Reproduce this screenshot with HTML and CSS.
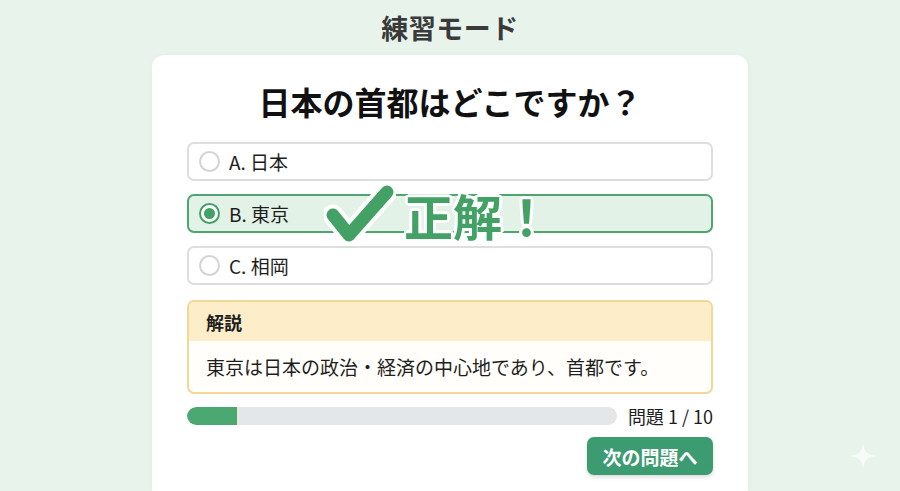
FILE: index.html
```html
<!DOCTYPE html>
<html lang="ja">
<head>
<meta charset="utf-8">
<title>練習モード</title>
<link rel="stylesheet" href="styles.css">
</head>
<body>
<header class="header"><h1 class="title">練習モード</h1></header>
<main class="card">
  <h2 class="question">日本の首都はどこですか？</h2>
  <div class="options">
    <div class="option"><span class="radio"></span><span class="label">A. 日本</span></div>
    <div class="option selected"><span class="radio"><span class="dot"></span></span><span class="label">B. 東京</span></div>
    <div class="option"><span class="radio"></span><span class="label">C. 相岡</span></div>
    <div class="result">
      <svg class="check" width="72" height="60" viewBox="0 0 72 60">
        <polyline points="9,31 25,51 63,8" fill="none" stroke="#ffffff" stroke-width="21" stroke-linecap="round" stroke-linejoin="round"/>
        <polyline points="9,31 25,51 63,8" fill="none" stroke="#43a166" stroke-width="13" stroke-linecap="round" stroke-linejoin="round"/>
      </svg>
      <span class="result-text">正解！</span>
    </div>
  </div>
  <section class="explain">
    <div class="explain-head">解説</div>
    <div class="explain-body">東京は日本の政治・経済の中心地であり、首都です。</div>
  </section>
  <div class="progress-row">
    <div class="bar"><div class="fill" style="width: 50px"></div></div>
    <span class="count">問題 1 / 10</span>
  </div>
  <div class="actions"><button class="next">次の問題へ</button></div>
</main>
<svg class="sparkle" width="30" height="30" viewBox="0 0 30 30"><path d="M15 1 C16 11 19 14 29 15 C19 16 16 19 15 29 C14 19 11 16 1 15 C11 14 14 11 15 1 Z" fill="#ffffff" opacity="0.6"/></svg>
</body>
</html>
```
FILE: styles.css
```css
* { box-sizing: border-box; }
html, body { margin: 0; padding: 0; }
body {
  width: 900px;
  height: 491px;
  overflow: hidden;
  position: relative;
  background: #e8f4eb;
  font-family: "Noto Sans CJK JP", "Noto Sans", sans-serif;
  color: #222;
}
.header {
  height: 55px;
  display: flex;
  align-items: center;
  justify-content: center;
}
.title {
  margin: 0;
  font-size: 27px;
  font-weight: 700;
  color: #3a3a3a;
  line-height: 1;
  letter-spacing: 0.5px;
}
.card {
  width: 596px;
  height: 436px;
  margin: 0 auto;
  background: #ffffff;
  border-radius: 12px 12px 0 0;
  padding: 25px 35px 0;
  box-shadow: 0 1px 6px rgba(0,0,0,0.04);
}
.question {
  margin: 0 0 19px;
  text-align: center;
  font-size: 32px;
  line-height: 43px;
  font-weight: 700;
  color: #111;
}
.options {
  position: relative;
  display: flex;
  flex-direction: column;
  gap: 13px;
}
.option {
  height: 39px;
  border: 2px solid #dedede;
  border-radius: 7px;
  display: flex;
  align-items: center;
  padding-left: 10px;
  gap: 9px;
  background: #fff;
}
.option.selected {
  border-color: #4fa56f;
  background: #e2f2e7;
}
.radio {
  width: 21px;
  height: 21px;
  border-radius: 50%;
  border: 2px solid #d3d3d3;
  background: #fff;
  display: flex;
  align-items: center;
  justify-content: center;
}
.selected .radio { border-color: #43a166; }
.dot {
  width: 11px;
  height: 11px;
  border-radius: 50%;
  background: #43a166;
}
.label {
  font-size: 19px;
  color: #1e1e1e;
}
.result {
  position: absolute;
  left: 137px;
  top: 42px;
  display: flex;
  align-items: center;
  gap: 8px;
}
.check { display: block; }
.result-text {
  font-size: 49px;
  font-weight: 700;
  line-height: 1;
  color: #43a166;
  text-shadow: 2px 0 0 #fff, -2px 0 0 #fff, 0 2px 0 #fff, 0 -2px 0 #fff,
    2px 2px 0 #fff, -2px -2px 0 #fff, 2px -2px 0 #fff, -2px 2px 0 #fff,
    3px 0 0 #fff, -3px 0 0 #fff, 0 3px 0 #fff, 0 -3px 0 #fff;
}
.explain {
  margin-top: 15px;
  border: 2px solid #f1d894;
  border-radius: 7px;
  overflow: hidden;
  background: #fffefa;
}
.explain-head {
  height: 39px;
  background: #fdeec9;
  display: flex;
  align-items: center;
  padding-left: 17px;
  font-size: 18px;
  font-weight: 700;
  color: #1e1e1e;
}
.explain-body {
  height: 51px;
  display: flex;
  align-items: center;
  padding-left: 17px;
  font-size: 19px;
  color: #1e1e1e;
}
.progress-row {
  margin-top: 13px;
  display: flex;
  align-items: center;
  gap: 11px;
  height: 18px;
}
.bar {
  flex: 1;
  height: 18px;
  border-radius: 9px;
  background: #e5e6e8;
  overflow: hidden;
}
.fill {
  height: 100%;
  background: #4aa870;
  border-radius: 9px 0 0 9px;
}
.count {
  font-size: 18px;
  color: #1e1e1e;
  white-space: nowrap;
}
.actions {
  margin-top: 12px;
  display: flex;
  justify-content: flex-end;
}
.next {
  width: 126px;
  height: 38px;
  border: none;
  border-radius: 7px;
  background: #3d9b72;
  color: #fff;
  font-family: inherit;
  font-size: 19px;
  font-weight: 700;
  box-shadow: 0 2px 4px rgba(0,0,0,0.15);
}
.sparkle {
  position: absolute;
  left: 848px;
  top: 441px;
}
```
